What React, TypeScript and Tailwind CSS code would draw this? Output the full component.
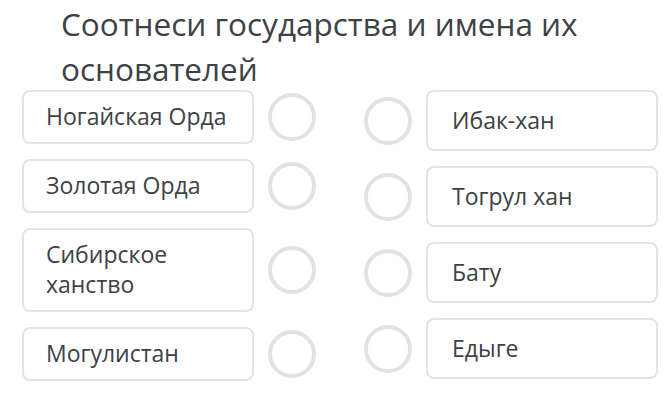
const leftItems = [
  { id: 1, label: "Ногайская Орда" },
  { id: 2, label: "Золотая Орда" },
  { id: 3, label: "Сибирское ханство" },
  { id: 4, label: "Могулистан" },
];

const rightItems = [
  { id: 1, label: "Ибак-хан" },
  { id: 2, label: "Тогрул хан" },
  { id: 3, label: "Бату" },
  { id: 4, label: "Едыге" },
];

function Dot() {
  return (
    <div className="w-[48px] h-[48px] shrink-0 rounded-full border-[4px] border-[#dfe3e5] bg-white" />
  );
}

export default function App() {
  return (
    <div
      className="w-[665px] h-[415px] bg-white text-[#3d4245] overflow-hidden"
      style={{ fontFamily: '"Open Sans", "Noto Sans", sans-serif' }}
    >
      <h1 className="pl-[61px] pt-[1px] pr-[40px] text-[31.5px] leading-[45px] font-normal">
        Соотнеси государства и имена их основателей
      </h1>

      <div className="flex -mt-[1px] pl-[22px]">
        {/* Left side */}
        <div className="flex flex-col gap-[15px]">
          {leftItems.map((item) => (
            <div key={item.id} className="flex items-center gap-[14px]">
              <div className="w-[232px] rounded-[8px] border-2 border-[#e1e5e7] px-[22px] pt-[9px] pb-[11px] text-[23px] leading-[30px]">
                {item.label}
              </div>
              <Dot />
            </div>
          ))}
        </div>

        {/* Right side */}
        <div className="flex flex-col gap-[15px] ml-[48px]">
          {rightItems.map((item) => (
            <div key={item.id} className="flex items-center gap-[14px]">
              <Dot />
              <div className="w-[232px] h-[61px] flex items-center rounded-[8px] border-2 border-[#e1e5e7] px-[24px] pb-[2px] text-[23px] leading-[30px]">
                {item.label}
              </div>
            </div>
          ))}
        </div>
      </div>
    </div>
  );
}
